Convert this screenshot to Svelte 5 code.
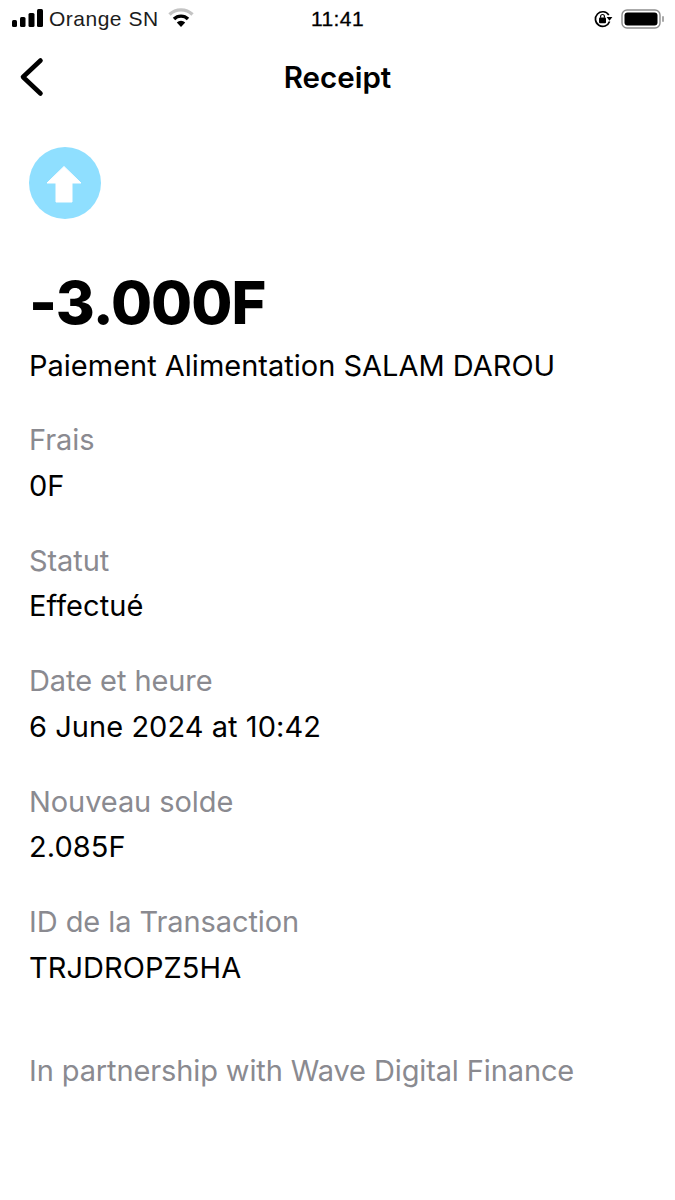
<script>
	const rows = [
		{ label: "Frais", value: "0F" },
		{ label: "Statut", value: "Effectué" },
		{ label: "Date et heure", value: "6 June 2024 at 10:42" },
		{ label: "Nouveau solde", value: "2.085F" },
		{ label: "ID de la Transaction", value: "TRJDROPZ5HA" },
	];
</script>

<div class="page">
	<div class="status">
		<div class="status-left">
			<svg class="signal" width="31" height="18" viewBox="0 0 31 18">
				<rect x="0" y="11" width="5" height="7" rx="1.5" fill="#000" />
				<rect x="8" y="8" width="5.5" height="10" rx="1.5" fill="#000" />
				<rect x="16.5" y="4" width="6" height="14" rx="1.5" fill="#000" />
				<rect x="25" y="0" width="6" height="18" rx="1.5" fill="#000" />
			</svg>
			<span class="carrier">Orange SN</span>
			<svg class="wifi" width="26" height="20" viewBox="0 0 26 20">
				<path d="M1.5 6.5 A16.5 16.5 0 0 1 24.5 6.5" fill="none" stroke="#c4c4c4" stroke-width="3.4" />
				<path d="M6 11 A10 10 0 0 1 20 11" fill="none" stroke="#000" stroke-width="3.4" />
				<path d="M13 19 L8.8 14.4 A6 6 0 0 1 17.2 14.4 Z" fill="#000" />
			</svg>
		</div>
		<span class="clock">11:41</span>
		<div class="status-right">
			<svg width="20" height="20" viewBox="0 0 20 20">
				<path d="M15.8 6 A7.3 7.3 0 1 0 16.6 12.5" fill="none" stroke="#000" stroke-width="1.7" />
				<path d="M13.6 8 L19.4 8 L16.5 11.8 Z" fill="#000" />
				<rect x="6" y="8.6" width="7" height="5.6" rx="1" fill="#000" />
				<path d="M7.6 8.8 V7.4 A1.9 1.9 0 0 1 11.4 7.4 V8.8" fill="none" stroke="#000" stroke-width="1.2" />
			</svg>
			<svg width="44" height="20" viewBox="0 0 44 20">
				<rect x="1" y="1" width="38" height="18" rx="5" fill="none" stroke="#8e8e8e" stroke-width="1.4" />
				<rect x="3.5" y="3.5" width="33" height="13" rx="3" fill="#000" />
				<rect x="41" y="7" width="2" height="6" rx="1" fill="#a8a8a8" />
			</svg>
		</div>
	</div>

	<header class="nav">
		<svg class="back" width="28" height="40" viewBox="0 0 28 40">
			<path d="M22.5 3.5 L5 20 L22.5 36.5" fill="none" stroke="#000" stroke-width="4.6" stroke-linecap="round" stroke-linejoin="round" />
		</svg>
		<h1>Receipt</h1>
	</header>

	<main class="content">
		<div class="badge">
			<svg width="36" height="38" viewBox="0 0 36 38">
				<path d="M18 1.5 L35 18 H26 V37 H10 V18 H1 Z" fill="#fff" stroke="#fff" stroke-linejoin="round" />
			</svg>
		</div>

		<div class="amount">-3.000F</div>
		<div class="title">Paiement Alimentation SALAM DAROU</div>

		{#each rows as row}
			<div class="row">
				<div class="label">{row.label}</div>
				<div class="value">{row.value}</div>
			</div>
		{/each}

		<div class="partner">In partnership with Wave Digital Finance</div>
	</main>
</div>

<style>
	:global(body) {
		background: #fff;
	}

	.page {
		width: 675px;
		height: 1200px;
		overflow: hidden;
		font-family: Inter, "Liberation Sans", sans-serif;
		color: #000;
		background: #fff;
	}

	.status {
		height: 37px;
		display: grid;
		grid-template-columns: 1fr auto 1fr;
		align-items: center;
		padding: 0 10px 0 12px;
		font-family: "Liberation Sans", sans-serif;
		font-size: 21px;
	}

	.status-left {
		display: flex;
		align-items: center;
		gap: 6px;
	}

	.signal {
		margin-top: -1px;
	}

	.carrier {
		color: #1c1c1c;
		letter-spacing: 0.5px;
	}

	.wifi {
		margin-left: 3px;
		margin-top: -1px;
	}

	.clock {
		font-weight: 500;
		letter-spacing: 0.4px;
		-webkit-text-stroke: 0.3px #000;
		margin-left: -2px;
	}

	.status-right {
		display: flex;
		justify-content: flex-end;
		align-items: center;
		gap: 8px;
	}

	.nav {
		position: relative;
		height: 80px;
		display: flex;
		align-items: center;
		justify-content: center;
	}

	.back {
		position: absolute;
		left: 18px;
		top: 20px;
	}

	h1 {
		margin: 0;
		font-size: 29.5px;
		font-weight: 600;
	}

	.content {
		padding: 30px 29px 0;
	}

	.badge {
		width: 72px;
		height: 72px;
		border-radius: 50%;
		background: #8fdfff;
		display: flex;
		align-items: center;
		justify-content: center;
	}

	.badge svg {
		margin-right: 2px;
		margin-top: 1px;
	}

	.amount {
		margin-top: 45px;
		font-size: 59.5px;
		line-height: 76px;
		font-weight: 800;
		letter-spacing: -1px;
	}

	.title {
		margin-top: 8px;
		font-size: 29px;
		line-height: 36px;
	}

	.row {
		margin-top: 38px;
	}

	.row + .row {
		margin-top: 39px;
	}

	.label {
		font-size: 29px;
		line-height: 36px;
		letter-spacing: -0.08px;
		color: #8a8a90;
	}

	.value {
		margin-top: 9.5px;
		font-size: 29px;
		line-height: 36px;
		letter-spacing: 0.05px;
	}

	.partner {
		margin-top: 67px;
		font-size: 29px;
		line-height: 36px;
		letter-spacing: -0.12px;
		color: #8a8a90;
	}
</style>
